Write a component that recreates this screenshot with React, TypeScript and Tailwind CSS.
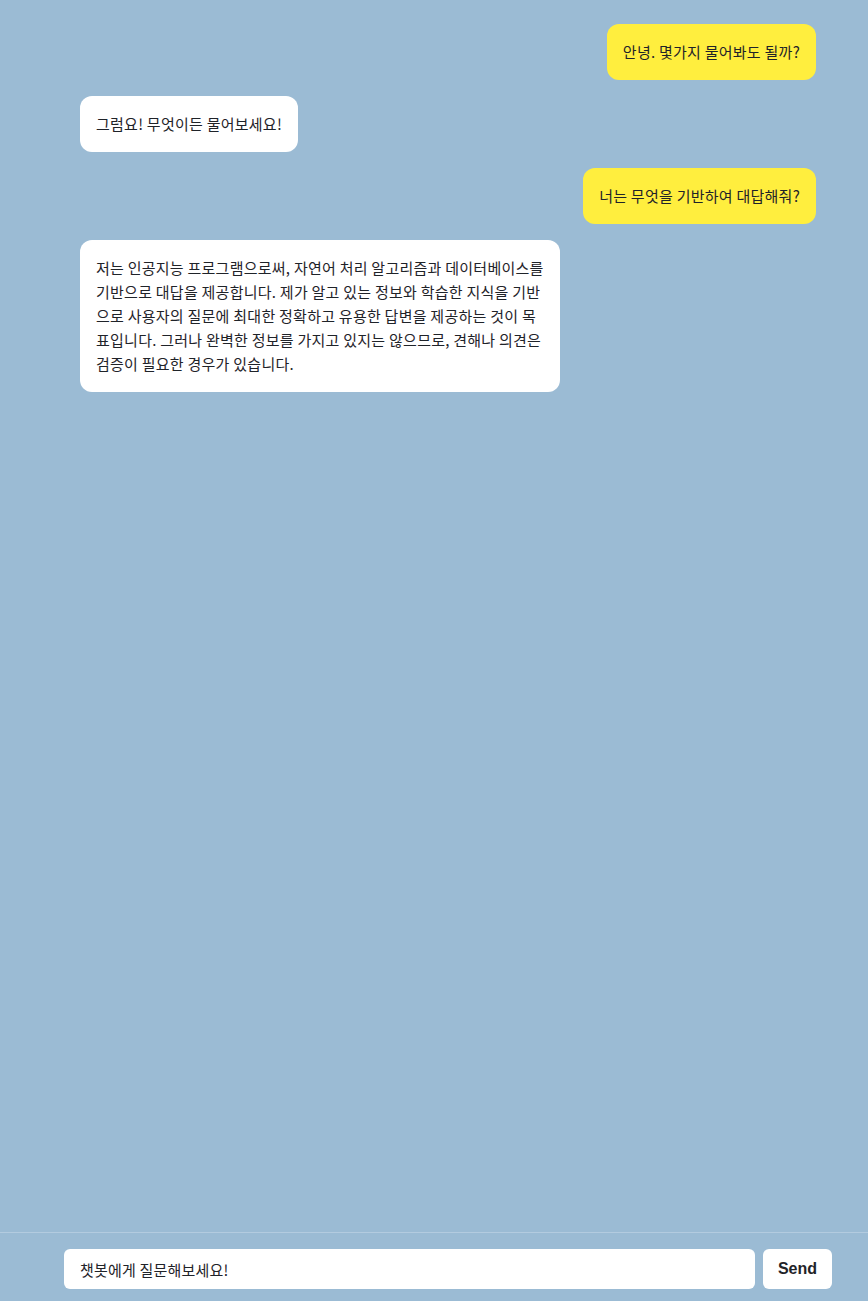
import React from 'react';

type Message = { from: 'user' | 'bot'; text: string };

const messages: Message[] = [
  { from: 'user', text: '안녕. 몇가지 물어봐도 될까?' },
  { from: 'bot', text: '그럼요! 무엇이든 물어보세요!' },
  { from: 'user', text: '너는 무엇을 기반하여 대답해줘?' },
  {
    from: 'bot',
    text: '저는 인공지능 프로그램으로써, 자연어 처리 알고리즘과 데이터베이스를 기반으로 대답을 제공합니다. 제가 알고 있는 정보와 학습한 지식을 기반으로 사용자의 질문에 최대한 정확하고 유용한 답변을 제공하는 것이 목표입니다. 그러나 완벽한 정보를 가지고 있지는 않으므로, 견해나 의견은 검증이 필요한 경우가 있습니다.',
  },
];

const App: React.FC = () => {
  return (
    <div className="h-screen w-full flex flex-col bg-[#9bbbd4] font-['Noto_Sans_CJK_KR','Noto_Sans',sans-serif] text-[#1f2329]">
      {/* Message list */}
      <div className="flex-1 overflow-y-auto pt-6 pl-[80px] pr-[52px] flex flex-col gap-4">
        {messages.map((m, i) => (
          <div key={i} className={m.from === 'user' ? 'flex justify-end' : 'flex justify-start'}>
            <div
              className={
                m.from === 'user'
                  ? 'bg-[#ffee3e] rounded-xl px-4 py-4 text-[15px] leading-6 tracking-[0.25px] max-w-[480px]'
                  : 'bg-white rounded-xl px-4 py-4 text-[15px] leading-6 tracking-[0.25px] max-w-[480px]'
              }
            >
              {m.text}
            </div>
          </div>
        ))}
      </div>

      {/* Input bar */}
      <div className="border-t border-[#b3cbdf] pt-4 pb-3 pl-16 pr-9 flex gap-2">
        <input
          className="flex-1 h-10 rounded-md bg-white px-4 text-[15px] tracking-[0.2px] outline-none placeholder:text-[#1f2329]"
          placeholder="챗봇에게 질문해보세요!"
        />
        <button className="w-[69px] h-10 rounded-md bg-white text-[16px] font-bold font-['Liberation_Sans',sans-serif] text-[#1f2329]">
          Send
        </button>
      </div>
    </div>
  );
};

export default App;
